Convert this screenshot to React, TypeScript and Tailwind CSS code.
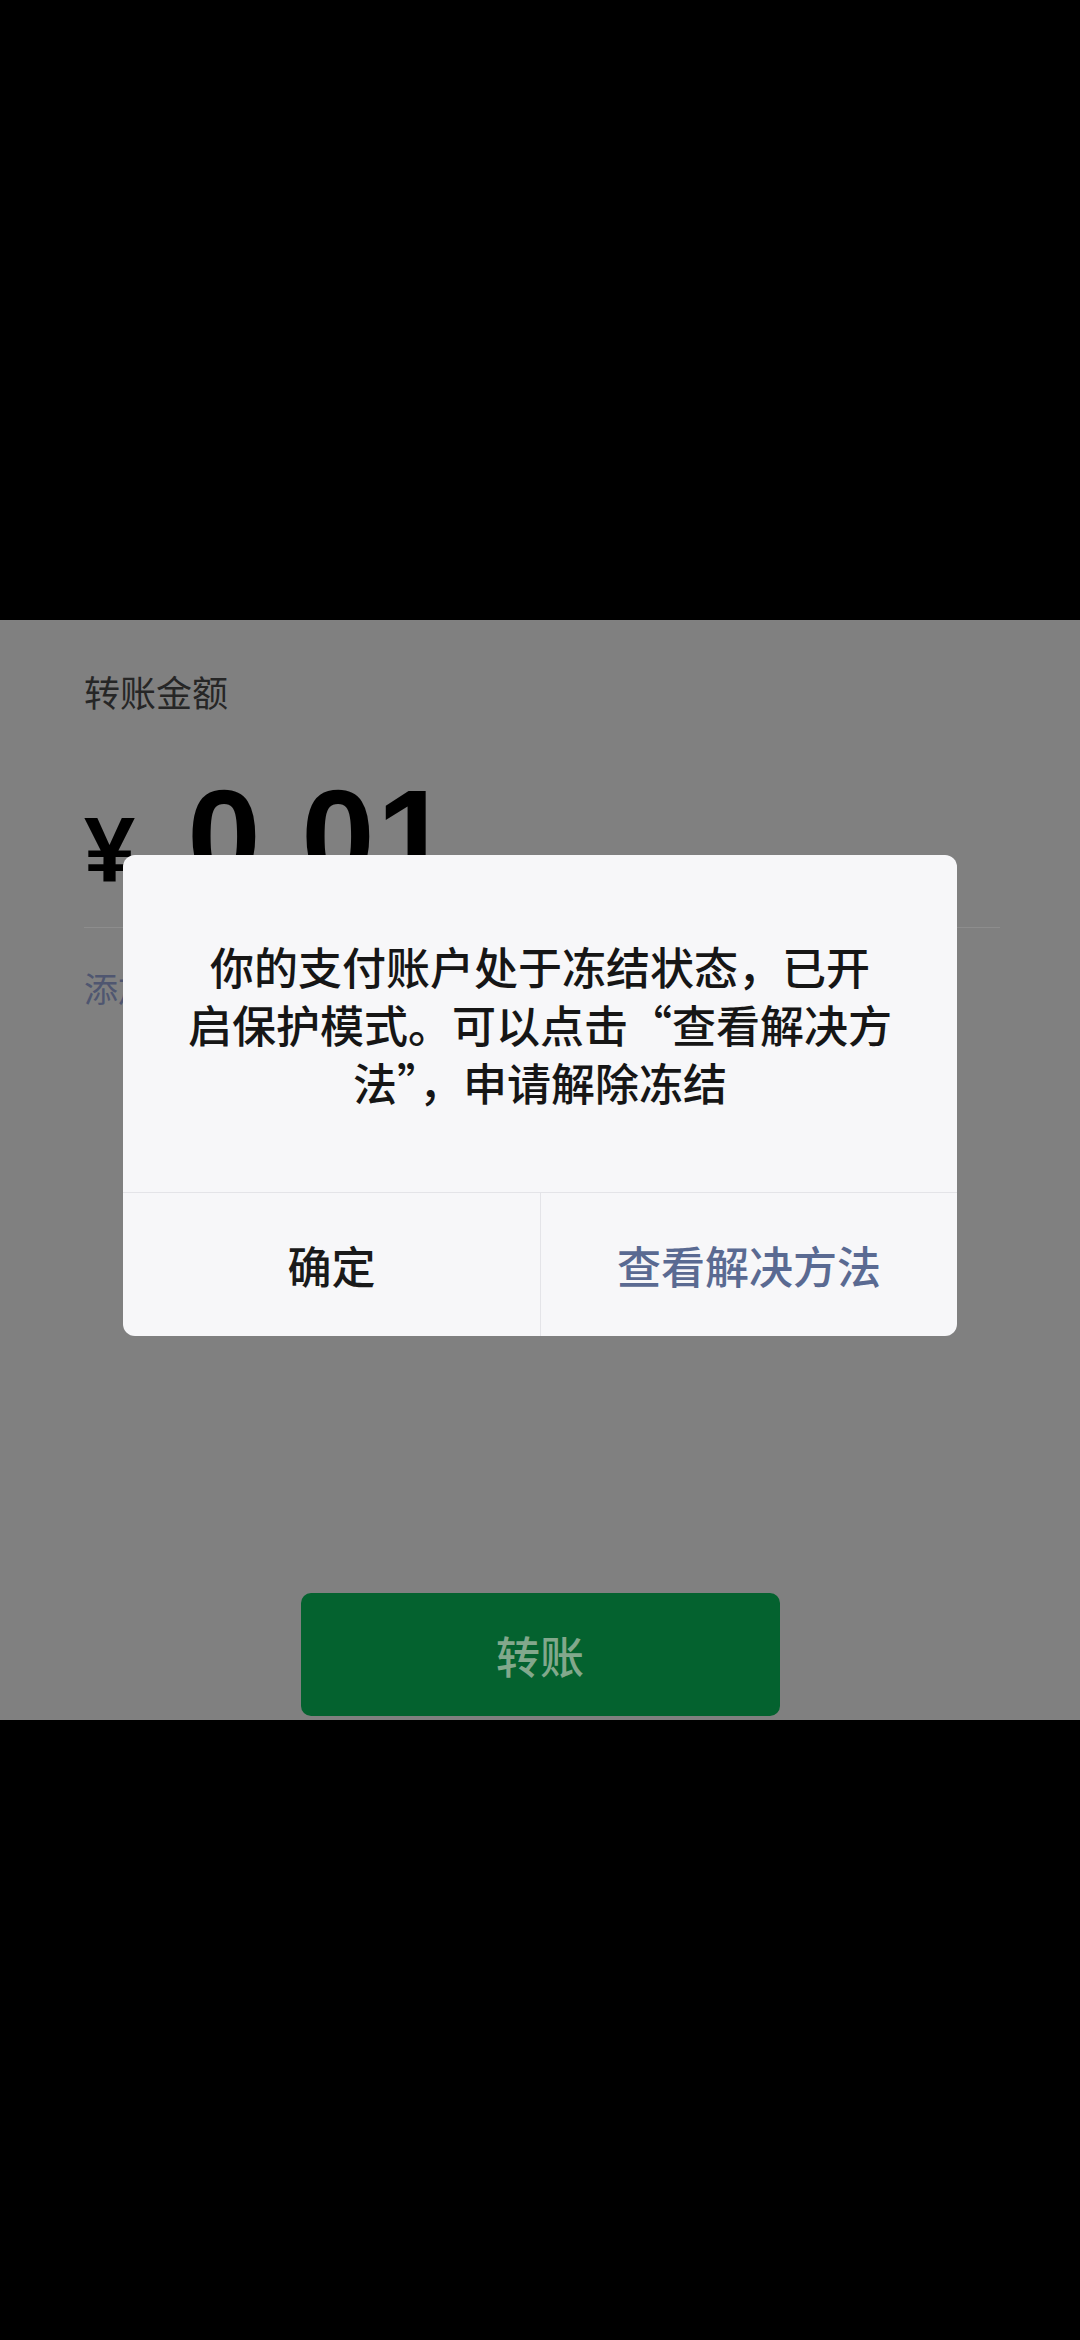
import { useState } from "react";

const cjk = "font-['Noto_Sans_CJK_SC',sans-serif]";

function FrozenDialog({ onClose }: { onClose: () => void }) {
  return (
    <div className="absolute left-1/2 top-[235px] w-[834px] -translate-x-1/2 overflow-hidden rounded-[12px] bg-[#f7f7f9]">
      <div className="flex h-[337px] items-center justify-center px-[40px]">
        <p className={`${cjk} text-center text-[44px] font-medium leading-[58px] text-[#161616]`}>
          你的支付账户处于冻结状态，已开
          <br />
          启保护模式。可以点击“查看解决方
          <br />
          法”，申请解除冻结
        </p>
      </div>
      <div className="grid h-[144px] grid-cols-2 border-t border-[#e4e4e8]">
        <button
          onClick={onClose}
          className={`${cjk} text-[44px] font-medium text-[#1a1a1a]`}
        >
          确定
        </button>
        <button
          className={`${cjk} border-l border-[#e4e4e8] text-[44px] font-medium text-[#5a6a92]`}
        >
          查看解决方法
        </button>
      </div>
    </div>
  );
}

export default function App() {
  const [showDialog, setShowDialog] = useState(true);

  return (
    <div className="flex min-h-[2340px] flex-col bg-black">
      <div className="h-[620px]" />

      {/* transfer page, dimmed behind the alert */}
      <main className="relative flex h-[1100px] flex-col bg-[#808080]">
        <div className="px-[84px] pt-[49px]">
          <div className={`${cjk} text-[36px] leading-[44px] text-[#262626]`}>转账金额</div>

          <div className="mt-[58px] flex items-baseline gap-[52px] font-['Liberation_Sans',sans-serif] font-bold leading-none text-black">
            <span className="text-[92px]">¥</span>
            <span className="text-[132px] tracking-[2px]">0.01</span>
          </div>

          <div className="mt-[24px] h-px w-[916px] bg-[#8d8d8d]" />

          <div className={`${cjk} mt-[40px] text-[34px] leading-[40px] text-[#4f5670]`}>
            添加转账说明
          </div>
        </div>

        <div className="mt-auto mb-[4px] flex justify-center">
          <button className={`${cjk} h-[123px] w-[479px] rounded-[10px] bg-[#04622f] text-[44px] font-medium text-[#82a88c]`}>
            转账
          </button>
        </div>

        {showDialog && <FrozenDialog onClose={() => setShowDialog(false)} />}
      </main>

      <div className="flex-1" />
    </div>
  );
}
